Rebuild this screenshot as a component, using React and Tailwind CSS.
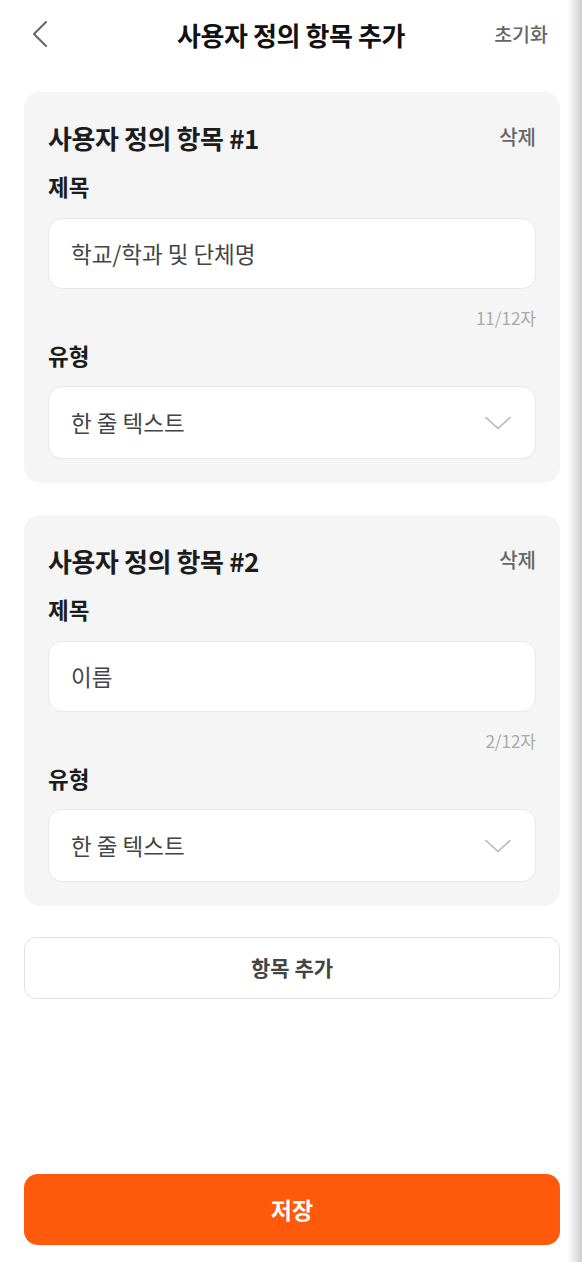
// CustomFieldsPage.jsx

const fields = [
  { id: 1, title: "학교/학과 및 단체명", count: 11 },
  { id: 2, title: "이름", count: 2 },
];

function FieldCard({ index, title, count }) {
  return (
    <div className="rounded-[16px] bg-[#f5f5f5] px-6 pt-[30px] pb-6">
      {/* HEADER */}
      <div className="flex items-center justify-between h-[30px]">
        <h2 className="text-[26px] font-semibold text-[#1c1c1c] tracking-[-0.4px]">
          사용자 정의 항목 #{index}
        </h2>
        <button type="button" className="text-[20px] font-medium text-[#666]">
          삭제
        </button>
      </div>

      {/* TITLE */}
      <p className="mt-[21px] text-[22.5px] font-semibold text-[#1c1c1c] leading-[26px]">
        제목
      </p>
      <div className="mt-[19px] h-[71px] rounded-[14px] border border-[#e8e8e8] bg-white flex items-center px-[22px]">
        <span className="text-[22.5px] text-[#444]">{title}</span>
      </div>
      <p className="mt-[19px] text-right text-[17px] text-[#aaa] leading-[20px]">
        {count}/12자
      </p>

      {/* TYPE */}
      <p className="mt-[14px] text-[22.5px] font-semibold text-[#1c1c1c] leading-[26px]">
        유형
      </p>
      <div className="mt-[18px] h-[73px] rounded-[14px] border border-[#e8e8e8] bg-white flex items-center justify-between pl-[22px] pr-[24px]">
        <span className="text-[22.5px] text-[#444]">한 줄 텍스트</span>
        <svg width="26" height="14" viewBox="0 0 26 14" fill="none">
          <path d="M1 1.5 L13 12.5 L25 1.5" stroke="#b5b5b5" strokeWidth="1.6" strokeLinecap="round" strokeLinejoin="round" />
        </svg>
      </div>
    </div>
  );
}

function App() {
  return (
    <div
      className="relative flex flex-col h-[1262px] w-full bg-white"
      style={{ fontFamily: '"Noto Sans CJK KR", "Noto Sans", sans-serif' }}
    >
      {/* TOP BAR */}
      <header className="h-[68px] flex items-center justify-between pl-[24px] pr-[34px] relative">
        <button type="button" className="w-[40px] h-[40px] flex items-center pl-[8px]">
          <svg width="16" height="28" viewBox="0 0 16 28" fill="none">
            <path d="M14 2 L2 14 L14 26" stroke="#666" strokeWidth="2" strokeLinecap="round" strokeLinejoin="round" />
          </svg>
        </button>
        <h1 className="absolute left-1/2 -translate-x-1/2 text-[26px] font-bold text-[#111] tracking-[-0.4px] whitespace-nowrap">
          사용자 정의 항목 추가
        </h1>
        <button type="button" className="text-[19.5px] font-medium text-[#666]">
          초기화
        </button>
      </header>

      {/* CARDS */}
      <main className="pl-[24px] pr-[22px] pt-[24px] flex flex-col gap-[32px]">
        {fields.map((f) => (
          <FieldCard key={f.id} index={f.id} title={f.title} count={f.count} />
        ))}

        <button
          type="button"
          className="-mt-[1px] h-[62px] rounded-[12px] border border-[#e3e3e3] bg-white text-[21px] font-semibold text-[#444]"
        >
          항목 추가
        </button>
      </main>

      <div className="flex-1" />

      {/* SAVE */}
      <div className="pl-[24px] pr-[22px] pb-[17px]">
        <button
          type="button"
          className="w-full h-[71px] rounded-[14px] bg-[#ff5a0b] text-[23px] font-bold text-white"
        >
          저장
        </button>
      </div>

      {/* EDGE SHADOW */}
      <div className="pointer-events-none absolute right-0 top-0 h-full w-[15px] bg-gradient-to-r from-white/0 to-[#cfcfcf]" />
    </div>
  );
}

export default App;
